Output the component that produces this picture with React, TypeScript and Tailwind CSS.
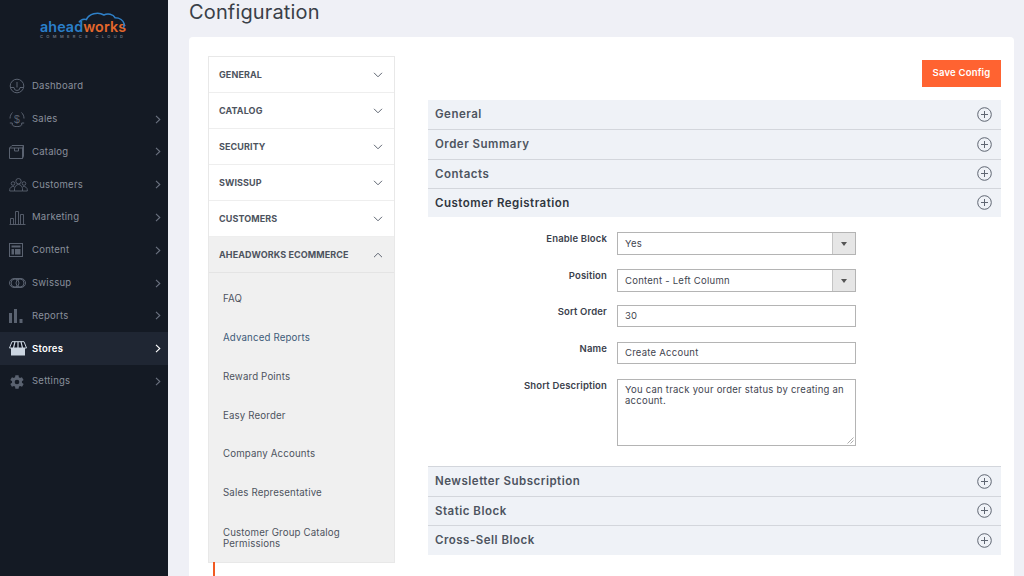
import React from "react";

const G = "#5a6270";

function Chev({ active }: { active?: boolean }) {
  return (
    <svg width="6" height="9" viewBox="0 0 6 9" fill="none" stroke={active ? "#ffffff" : "#6b7280"} strokeWidth="1.1">
      <path d="M1 .8 4.800 4.500 1 8.200" />
    </svg>
  );
}

const icons: Record<string, React.ReactNode> = {
  Dashboard: (
    <svg width="16" height="16" viewBox="0 0 16 16" fill="none" stroke={G} strokeWidth="1"><circle cx="8" cy="8" r="6.800" /><path d="M1.500 9.500h3.500a3 3 0 0 0 6 0h3.500M8 4v5.500" /></svg>
  ),
  Sales: (
    <svg width="16" height="16" viewBox="0 0 16 16" fill="none" stroke={G} strokeWidth="1"><path d="M3.500 1.500C2 3 1 5 1 7.500M12.500 1.500C14 3 15 5 15 7.500M4 14.700c1.200.6 2.600 1 4 1s2.800-.4 4-1" /><text x="8" y="12" fontSize="10.500" fontFamily="Liberation Sans" textAnchor="middle" fill={G} stroke="none">$</text><path d="M.8 12h2.500v2.500M15.200 12h-2.500v2.500" /></svg>
  ),
  Catalog: (
    <svg width="15" height="14" viewBox="0 0 15 14" fill="none" stroke={G} strokeWidth="1"><path d="M.5 3 3 .5h11.500V11l-1 2.500H.5zM.5 3h13v10.500M14.500 .5l-1 2.500M5.500 3v3h4V3" /></svg>
  ),
  Customers: (
    <svg width="19" height="14" viewBox="0 0 19 14" fill="none" stroke={G} strokeWidth="0.9"><circle cx="9.500" cy="3.200" r="2.700" /><circle cx="4" cy="5.500" r="1.800" /><circle cx="15" cy="5.500" r="1.800" /><path d="M5.500 13v-2.500c0-2 2-4 4-4s4 2 4 4V13zM5 8.300c-2.500 0-4.300 1.500-4.300 3.500V13h4.800M14 8.300c2.500 0 4.300 1.500 4.300 3.500V13h-4.800" /></svg>
  ),
  Marketing: (
    <svg width="17" height="14" viewBox="0 0 17 14" fill="none" stroke={G} strokeWidth="0.9"><path d="M.5 13.500h16M1.500 13.500V7.500h3v6M6.500 13.500V.5h3v13M11.500 13.500V3.500h3v10" /></svg>
  ),
  Content: (
    <svg width="14" height="14" viewBox="0 0 14 14" fill="none"><rect x=".5" y=".5" width="13" height="13" stroke={G} /><rect x="2.500" y="2.500" width="9" height="2" fill={G} /><rect x="2.500" y="6" width="2.500" height="5.500" fill={G} /><rect x="6" y="6" width="5.500" height="5.500" fill={G} /></svg>
  ),
  Swissup: (
    <svg width="17" height="10" viewBox="0 0 17 10" fill="none" stroke={G} strokeWidth="1"><rect x=".5" y=".5" width="16" height="9" rx="4.500" /><circle cx="6" cy="5" r="4" /><circle cx="11" cy="5" r="4" /></svg>
  ),
  Reports: (
    <svg width="14" height="14" viewBox="0 0 14 14" fill={G}><rect x="0" y="4" width="3" height="10" /><rect x="5" y="0" width="3" height="14" /><rect x="10.500" y="10" width="3" height="4" /></svg>
  ),
  Stores: (
    <svg width="18" height="15" viewBox="0 0 18 15" fill="none"><path d="M2 6V14.500H16V6z" fill="#cbd5e1" /><path d="M3 .7h12l2.500 6.300H.5z" fill="#0f1420" stroke="#cbd5e1" strokeWidth="1" /><path d="M6 .7 4.500 7M9 .7V7M12 .7 13.500 7" stroke="#cbd5e1" strokeWidth="1.200" /></svg>
  ),
  Settings: (
    <svg width="16" height="16" viewBox="0 0 24 24" fill={G}><path d="M19.400 13a7.600 7.600 0 0 0 0-2l2.500-2-2.500-4.300-3 1.200a7.600 7.600 0 0 0-1.700-1L14.400 1.700H9.600l-.5 3.200a7.600 7.600 0 0 0-1.700 1l-3-1.200L2 9l2.600 2a7.600 7.600 0 0 0 0 2L2 15l2.400 4.300 3-1.200a7.600 7.600 0 0 0 1.700 1l.5 3.200h4.800l.5-3.200a7.600 7.600 0 0 0 1.700-1l3 1.200L22 15zM12 15.500a3.500 3.500 0 1 1 0-7 3.500 3.500 0 0 1 0 7z" /></svg>
  ),
};

const side = ["Dashboard", "Sales", "Catalog", "Customers", "Marketing", "Content", "Swissup", "Reports", "Stores", "Settings"];

function Plus() {
  return (
    <svg width="15" height="15" viewBox="0 0 15 15" fill="none" stroke="#5f6672" strokeWidth="1" className="mb-[1px]">
      <circle cx="7.500" cy="7.500" r="6.800" />
      <path d="M7.500 4v7M4 7.500h7" />
    </svg>
  );
}

function Acc({ t, dark, h, line = true }: { t: string; dark?: boolean; h: string; line?: boolean }) {
  return (
    <div className={`flex items-center justify-between pl-[7px] pr-[9px] bg-[#eff2f7] ${h} ${line ? "border-b border-[#d3d6dc]" : ""}`}>
      <span className={`text-[11.5px] font-semibold tracking-[0.5px] pt-[1px] ${dark ? "text-[#303640]" : "text-[#4d5460]"}`}>{t}</span>
      <Plus />
    </div>
  );
}

function Row({ label, children, mb }: { label: string; children: React.ReactNode; mb: string }) {
  return (
    <div className={`flex ${mb}`}>
      <div className="w-[189px] pr-[10px] text-right text-[9.5px] font-semibold tracking-[0.15px] leading-[12px] pt-[1px] text-[#3b414c]">{label}</div>
      <div className="w-[239px]">{children}</div>
    </div>
  );
}

function Select({ v }: { v: string }) {
  return (
    <div className="flex h-[23px] border border-[#b4b4b4] bg-white">
      <div className="flex-1 pl-[7px] text-[9.5px] tracking-[0.25px] leading-[21px] text-[#3f4550]">{v}</div>
      <div className="w-[23px] bg-[#e6e6e6] border-l border-[#c4c4c4] flex items-center justify-center">
        <svg width="6" height="4" viewBox="0 0 6 4" fill="#555"><path d="M0 0h6L3 4z" /></svg>
      </div>
    </div>
  );
}

function Input({ v }: { v: string }) {
  return <div className="h-[22px] border border-[#b4b4b4] bg-white pl-[7px] text-[9.5px] tracking-[0.25px] leading-[20px] text-[#3f4550]">{v}</div>;
}

const navTop = ["GENERAL", "CATALOG", "SECURITY", "SWISSUP", "CUSTOMERS"];
const sub = ["FAQ", "Advanced Reports", "Reward Points", "Easy Reorder", "Company Accounts", "Sales Representative"];

export default function App() {
  return (
    <div className="flex h-[576px] w-[1024px] overflow-hidden bg-[#eff0f6] font-['Inter','Liberation_Sans',sans-serif]">
      <aside className="w-[168px] shrink-0 bg-[#141a24]">
        <div className="h-[70px] pt-[20px] pl-[40px]">
          <div className="relative w-[90px]">
            <svg width="50" height="19" viewBox="0 0 54 20" className="absolute left-[38px] top-[-9px]" fill="none" stroke="#2f80c8" strokeWidth="1.700">
              <path d="M1 12c2-3 5-4 8-3 3-6 12-9 19-5 4-2 10-1 12 3 5 0 9 3 10 7 0 2-.5 3-1 4" />
            </svg>
            <div className="text-[14.3px] leading-[14px] font-semibold tracking-[0.1px]">
              <span className="text-[#2a7fc9]">ahead</span><span className="text-[#e4682c]">works</span>
            </div>
            <div className="text-[4px] leading-[5px] tracking-[3.4px] whitespace-nowrap text-[#6b7280] font-semibold">COMMERCE CLOUD</div>
          </div>
        </div>
        {side.map((s) => {
          const active = s === "Stores";
          return (
            <div key={s} className={`flex items-center h-[32.8px] ${active ? "bg-[#1f2633]" : ""}`}>
              <div className="w-[32px] pl-[9px] flex justify-start shrink-0">{icons[s]}</div>
              <span className={`text-[9.5px] tracking-[0.25px] ${active ? "text-white font-semibold" : "text-[#8a909c]"}`}>{s}</span>
              {s !== "Dashboard" && <span className="ml-auto mr-[7px] flex"><Chev active={active} /></span>}
            </div>
          );
        })}
      </aside>

      <main className="flex-1 min-w-0 pl-[21px] pr-[10px]">
        <h1 className="h-[37px] pt-[1px] text-[20px] leading-[23px] tracking-[0.15px] text-[#3a3f48] font-normal">Configuration</h1>
        <div className="h-[560px] bg-white rounded-[4px] flex pt-[19px] pl-[19px] pr-[13px]">
          <div className="w-[187px] shrink-0 relative">
            <div className="border border-[#e8e8e8]">
              {navTop.map((n) => (
                <div key={n} className="h-[36px] flex items-center justify-between pl-[10px] pr-[11px] border-b border-[#eeeeee] bg-white">
                  <span className="text-[9px] font-bold tracking-[0.1px] text-[#4d535e]">{n}</span>
                  <svg width="10" height="6" viewBox="0 0 10 6" fill="none" stroke="#5f6672" strokeWidth="1"><path d="M1 .8 5 4.800 9 .8" /></svg>
                </div>
              ))}
              <div className="h-[36px] flex items-center justify-between pl-[10px] pr-[11px] border-b border-[#e4e4e4] bg-[#f0f0f0]">
                <span className="text-[9px] font-bold tracking-[0.1px] text-[#4d535e]">AHEADWORKS ECOMMERCE</span>
                <svg width="10" height="6" viewBox="0 0 10 6" fill="none" stroke="#5f6672" strokeWidth="1"><path d="M1 5.200 5 1.200l4 4" /></svg>
              </div>
              <div className="bg-[#f0f0f0] pl-[14px] h-[289px] pt-[7px]">
                {sub.map((s, i) => (
                  <div key={s} className={`h-[38.8px] flex items-center text-[9.7px] tracking-[0.15px] ${i === 1 ? "text-[#3d5a78]" : "text-[#4d535e]"}`}>{s}</div>
                ))}
                <div className="mt-[14px] text-[9.7px] tracking-[0.15px] leading-[11px] text-[#4d535e]">Customer Group Catalog<br />Permissions</div>
              </div>
            </div>
            <div className="absolute left-[5px] top-[506px] w-[2px] h-[20px] bg-[#f15a22]" />
          </div>

          <div className="ml-[33px] flex-1 min-w-0">
            <div className="flex justify-end pt-[4px] mb-[13px]">
              <div className="w-[79px] h-[27px] bg-[#ff6331] text-white text-[9.5px] font-semibold tracking-[0.2px] flex items-center justify-center">Save Config</div>
            </div>
            <Acc t="General" h="h-[30px]" />
            <Acc t="Order Summary" h="h-[30px]" />
            <Acc t="Contacts" h="h-[29px]" />
            <Acc t="Customer Registration" dark h="h-[28px]" line={false} />
            <div className="pt-[15px] h-[250px] border-b border-[#d3d6dc]">
              <Row label="Enable Block" mb="mb-[14px]"><Select v="Yes" /></Row>
              <Row label="Position" mb="mb-[13px]"><Select v="Content - Left Column" /></Row>
              <Row label="Sort Order" mb="mb-[15px]"><Input v="30" /></Row>
              <Row label="Name" mb="mb-[15px]"><Input v="Create Account" /></Row>
              <Row label="Short Description" mb="mb-0">
                <div className="relative h-[67px] border border-[#b4b4b4] bg-white px-[7px] pt-[4px] text-[9.5px] leading-[11px] tracking-[0.25px] text-[#3f4550]">
                  You can track your order status by creating an account.
                  <svg width="7" height="7" viewBox="0 0 7 7" className="absolute right-[1px] bottom-[1px]" stroke="#888" strokeWidth="0.7"><path d="M6.500 .5l-6 6M6.500 3.500l-3 3" /></svg>
                </div>
              </Row>
            </div>
            <Acc t="Newsletter Subscription" h="h-[30px]" />
            <Acc t="Static Block" h="h-[29px]" />
            <Acc t="Cross-Sell Block" h="h-[29px]" line={false} />
          </div>
        </div>
      </main>
    </div>
  );
}
